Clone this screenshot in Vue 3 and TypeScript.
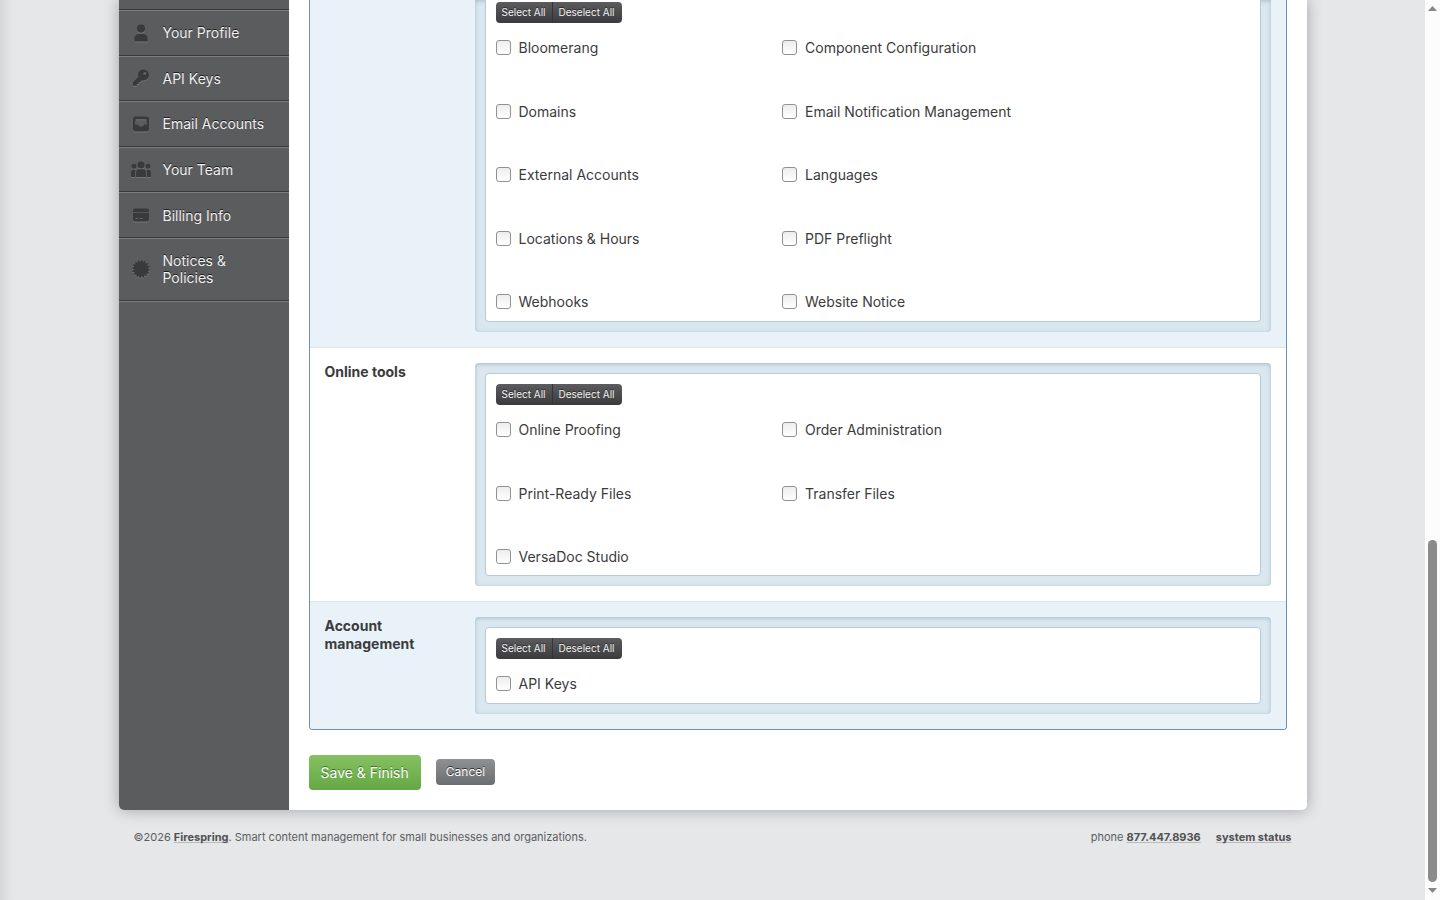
<script setup lang="ts">
interface Section {
  id: string
  title: string
  options: string[]
}

interface NavItem {
  label: string
  icon: string
}

const navItems: NavItem[] = [
  { label: 'Your Profile', icon: 'user' },
  { label: 'API Keys', icon: 'key' },
  { label: 'Email Accounts', icon: 'inbox' },
  { label: 'Your Team', icon: 'team' },
  { label: 'Billing Info', icon: 'card' },
  { label: 'Notices & Policies', icon: 'seal' },
]

const sections: Section[] = [
  {
    id: 'settings',
    title: '',
    options: [
      'Bloomerang', 'Component Configuration',
      'Domains', 'Email Notification Management',
      'External Accounts', 'Languages',
      'Locations & Hours', 'PDF Preflight',
      'Webhooks', 'Website Notice',
    ],
  },
  {
    id: 'tools',
    title: 'Online tools',
    options: ['Online Proofing', 'Order Administration', 'Print-Ready Files', 'Transfer Files', 'VersaDoc Studio'],
  },
  { id: 'account', title: 'Account management', options: ['API Keys'] },
]

// Outline of the notched seal: alternating outer and inner radii around the centre.
const sealPoints: string = Array.from({ length: 64 }, (_, i) => {
  const radius = i % 4 < 2 ? 9 : 7.4
  const angle = ((i + 0.5) / 64) * Math.PI * 2
  return `${(10 + radius * Math.cos(angle)).toFixed(2)},${(10 + radius * Math.sin(angle)).toFixed(2)}`
}).join(' ')

function setAll(event: Event, value: boolean): void {
  const panel = (event.currentTarget as HTMLElement).closest('.panel')
  panel?.querySelectorAll<HTMLInputElement>('input').forEach((box) => {
    box.checked = value
  })
}
</script>

<template>
  <div class="screen">
    <div class="page">
      <div class="wrapper">
        <nav class="sidebar">
          <ul class="nav">
            <li class="nav-lead"></li>
            <li v-for="item in navItems" :key="item.label">
              <a href="#" class="nav-link">
                <svg class="icon" viewBox="0 0 20 20" aria-hidden="true">
                  <g v-if="item.icon === 'user'">
                    <circle cx="10" cy="5.6" r="4.1" />
                    <path d="M3.3 18.4v-2.2c0-3.2 2-5.3 4.7-5.3h4c2.700 0 4.700 2.100 4.700 5.300v2.200z" />
                  </g>
                  <path
                    v-else-if="item.icon === 'key'"
                    fill-rule="evenodd"
                    d="M12.500 1.500a5.500 5.500 0 1 1-1.500 10.800l-1.500 1.700H7.700v1.900H5.800v1.800H2v-3.400l5.300-5.300A5.500 5.500 0 0 1 12.500 1.500zm1.300 2.800a1.400 1.400 0 1 0 0 2.800 1.400 1.400 0 0 0 0-2.800z"
                  />
                  <path
                    v-else-if="item.icon === 'inbox'"
                    fill-rule="evenodd"
                    d="M4.500 2.500h11a2.500 2.500 0 0 1 2.500 2.500v10a2.500 2.500 0 0 1-2.500 2.500h-11a2.500 2.500 0 0 1-2.500-2.500V5a2.500 2.500 0 0 1 2.500-2.500zM4.800 5.200L4 10.500h2.800l1.400 2h3.600l1.400-2H16l-.8-5.300z"
                  />
                  <g v-else-if="item.icon === 'team'">
                    <circle cx="10" cy="5" r="3.500" />
                    <circle cx="3" cy="6.200" r="2.500" />
                    <circle cx="17" cy="6.200" r="2.500" />
                    <path d="M5 17v-4.300C5 10.500 6.500 9.300 8 9.300h4c1.500 0 3 1.200 3 3.400V17z" />
                    <path d="M0 17v-4.200c0-1.800.9-3 2.300-3h2.200C4.100 10.700 4 11.700 4 12.700V17zM20 17v-4.200c0-1.800-.9-3-2.300-3h-2.200c.4.900.5 1.900.5 2.900V17z" />
                  </g>
                  <g v-else-if="item.icon === 'card'">
                    <path d="M4 3.500h12a2 2 0 0 1 2 2V7.500H2V5.500a2 2 0 0 1 2-2z" />
                    <path
                      fill-rule="evenodd"
                      d="M2 8h16v6.500a2 2 0 0 1-2 2H4a2 2 0 0 1-2-2zm2.500 5v.7H7V13zm4 0v.7H12V13z"
                    />
                  </g>
                  <polygon v-else :points="sealPoints" />
                </svg>
                <span>{{ item.label }}</span>
              </a>
            </li>
          </ul>
        </nav>

        <main class="content">
          <div class="sections">
            <section v-for="section in sections" :key="section.id" class="section" :class="'section-' + section.id">
              <h2 class="title">{{ section.title }}</h2>
              <div class="panel">
                <div class="panel-body">
                  <div class="toggles">
                    <button type="button" @click="setAll($event, true)">Select All</button>
                    <button type="button" @click="setAll($event, false)">Deselect All</button>
                  </div>
                  <div class="options">
                    <label v-for="option in section.options" :key="option" class="option">
                      <input type="checkbox" />
                      <span>{{ option }}</span>
                    </label>
                  </div>
                </div>
              </div>
            </section>
          </div>
          <div class="actions">
            <button type="button" class="save">Save &amp; Finish</button>
            <button type="button" class="cancel">Cancel</button>
          </div>
        </main>
      </div>

      <footer class="footer">
        <p>©2026 <a href="#">Firespring</a>. Smart content management for small businesses and organizations.</p>
        <p class="contact">
          <span>phone <a href="#">877.447.8936</a></span>
          <a href="#">system status</a>
        </p>
      </footer>
    </div>

    <div class="scrollbar" aria-hidden="true">
      <svg class="arrow" viewBox="0 0 9 5"><path d="M4.500 0L9 5H0z" /></svg>
      <div class="thumb"></div>
      <svg class="arrow" viewBox="0 0 9 5"><path d="M0 0h9L4.500 5z" /></svg>
    </div>
  </div>
</template>

<style>
body {
  margin: 0;
  background: #e6e7e9;
}
</style>

<style scoped>
.screen {
  display: flex;
  min-height: 100vh;
  font-family: Inter, "Liberation Sans", sans-serif;
  font-size: 14px;
  line-height: 18px;
  color: #3b3b3c;
}

.page {
  flex: 1;
  min-width: 0;
  background: linear-gradient(to right, #d6d7d9 0, #dddee0 5px, #e3e4e6 11px, #e6e7e9 18px);
}

.wrapper {
  display: flex;
  max-width: 1188px;
  margin: 0 auto;
  background: #fff;
  border-radius: 0 0 5px 5px;
  box-shadow: 0 0 15px rgba(0, 0, 0, 0.3);
}

.sidebar {
  flex: 0 0 170px;
  background: #5b5c5e;
  border-radius: 0 0 0 5px;
}

.nav {
  display: grid;
  grid-template-rows: 10px repeat(5, 1fr) 63px;
  min-height: 301px;
  margin: 0;
  padding: 0;
  list-style: none;
  border-bottom: 1px solid #7c7d7e;
}

.nav li {
  display: flex;
  box-sizing: border-box;
  border-top: 1px solid #7c7d7e;
  border-bottom: 1px solid #39393a;
}

.nav .nav-lead {
  border-top: 0;
}

.nav-link {
  display: flex;
  flex: 1;
  align-items: center;
  gap: 12px;
  padding: 0 20px 0 12px;
  color: #f0f0f0;
  line-height: 17px;
  text-decoration: none;
  text-shadow: 0 -1px 0 #1e1e1f;
}

.icon {
  flex: none;
  width: 20px;
  height: 20px;
  fill: #3a3a3c;
  filter: drop-shadow(0 1px 0 #747577);
}

.content {
  flex: 1;
  min-width: 0;
  padding: 0 20px 20px;
}

.sections {
  border: 1px solid #6b90a9;
  border-top: 0;
  border-radius: 0 0 4px 4px;
  overflow: hidden;
}

.section {
  display: grid;
  grid-template-columns: 135px 1fr;
  column-gap: 15px;
  padding: 15px;
  border-bottom: 1px solid #dbe6ee;
}

.section:nth-child(odd) {
  background: #eaf2f9;
}

.section:last-child {
  border-bottom: 0;
}

.title {
  margin: 0;
  font-size: 14px;
  line-height: 18px;
  font-weight: 700;
}

.panel {
  padding: 10px;
  background: #dae7ef;
  border-radius: 4px;
  box-shadow: inset 0 1px 4px #a5bdcb;
}

.panel-body {
  padding: 10px;
  background: #fff;
  border: 1px solid #b5cbd9;
  border-radius: 4px;
}

.section-settings {
  padding-top: 0;
}

.section-settings .panel {
  padding-top: 0;
  border-radius: 0 0 4px 4px;
}

.section-settings .panel-body {
  padding-top: 2px;
  border-top: 0;
  border-radius: 0 0 4px 4px;
}

.toggles {
  display: flex;
  margin-bottom: 16px;
}

.toggles button {
  height: 21px;
  padding: 0 6px;
  border: 0;
  background: linear-gradient(#5c5c5e, #3b3b3d);
  color: #f4f4f4;
  font: 10px/21px Inter, "Liberation Sans", sans-serif;
  text-shadow: 0 -1px 0 #2d2d2e;
}

.toggles button:first-child {
  border-right: 1px solid #343435;
  border-radius: 4px 0 0 4px;
}

.toggles button:last-child {
  padding-right: 7px;
  border-radius: 0 4px 4px 0;
}

.options {
  display: grid;
  grid-template-columns: 38% 1fr;
  align-content: space-between;
}

.section-settings .options {
  min-height: 272px;
}

.section-tools .options {
  min-height: 145px;
  margin-bottom: -1px;
}

.option {
  display: flex;
  align-items: flex-start;
  gap: 8px;
}

.option input {
  appearance: none;
  box-sizing: border-box;
  width: 15px;
  height: 15px;
  margin: 1px 0 0;
  border: 1px solid #919192;
  border-radius: 3px;
  background: linear-gradient(#ededed, #fff);
}

.option input:checked {
  background: #6b90a9;
}

.actions {
  display: flex;
  align-items: flex-start;
  gap: 15px;
  margin-top: 25px;
}

.save {
  height: 35px;
  padding: 0 12px;
  border: 0;
  border-radius: 4px;
  background: linear-gradient(#86c162, #65a745);
  color: #fff;
  font: 14px/35px Inter, "Liberation Sans", sans-serif;
  text-shadow: 0 -1px 0 #3e7423;
}

.cancel {
  height: 26px;
  margin-top: 4px;
  padding: 0 10px;
  border: 0;
  border-radius: 4px;
  background: linear-gradient(#8f9092, #6b6e71);
  color: #fff;
  font: 12px/26px Inter, "Liberation Sans", sans-serif;
  text-shadow: 0 -1px 0 #2e2e2f;
}

.footer {
  display: flex;
  justify-content: space-between;
  max-width: 1158px;
  margin: 0 auto;
  padding: 18px 0;
  font-size: 11px;
  color: #5c5d5f;
}

.footer p {
  margin: 0;
}

.footer a {
  color: #505153;
  font-weight: 700;
  text-decoration: underline 1px #b9babc;
  text-decoration-skip-ink: none;
  text-underline-offset: 1px;
}

.contact {
  display: flex;
  gap: 15px;
}

.scrollbar {
  display: flex;
  flex: 0 0 15px;
  flex-direction: column;
  align-items: center;
  justify-content: flex-end;
  box-sizing: border-box;
  padding: 6px 0 7px;
  background: #fcfcfc;
}

.arrow {
  width: 9px;
  height: 5px;
  fill: #868686;
}

.arrow:first-child {
  margin-bottom: auto;
}

.thumb {
  width: 9px;
  height: 38vh;
  margin-bottom: 6px;
  border-radius: 5px;
  background: #8b8b8b;
}
</style>
